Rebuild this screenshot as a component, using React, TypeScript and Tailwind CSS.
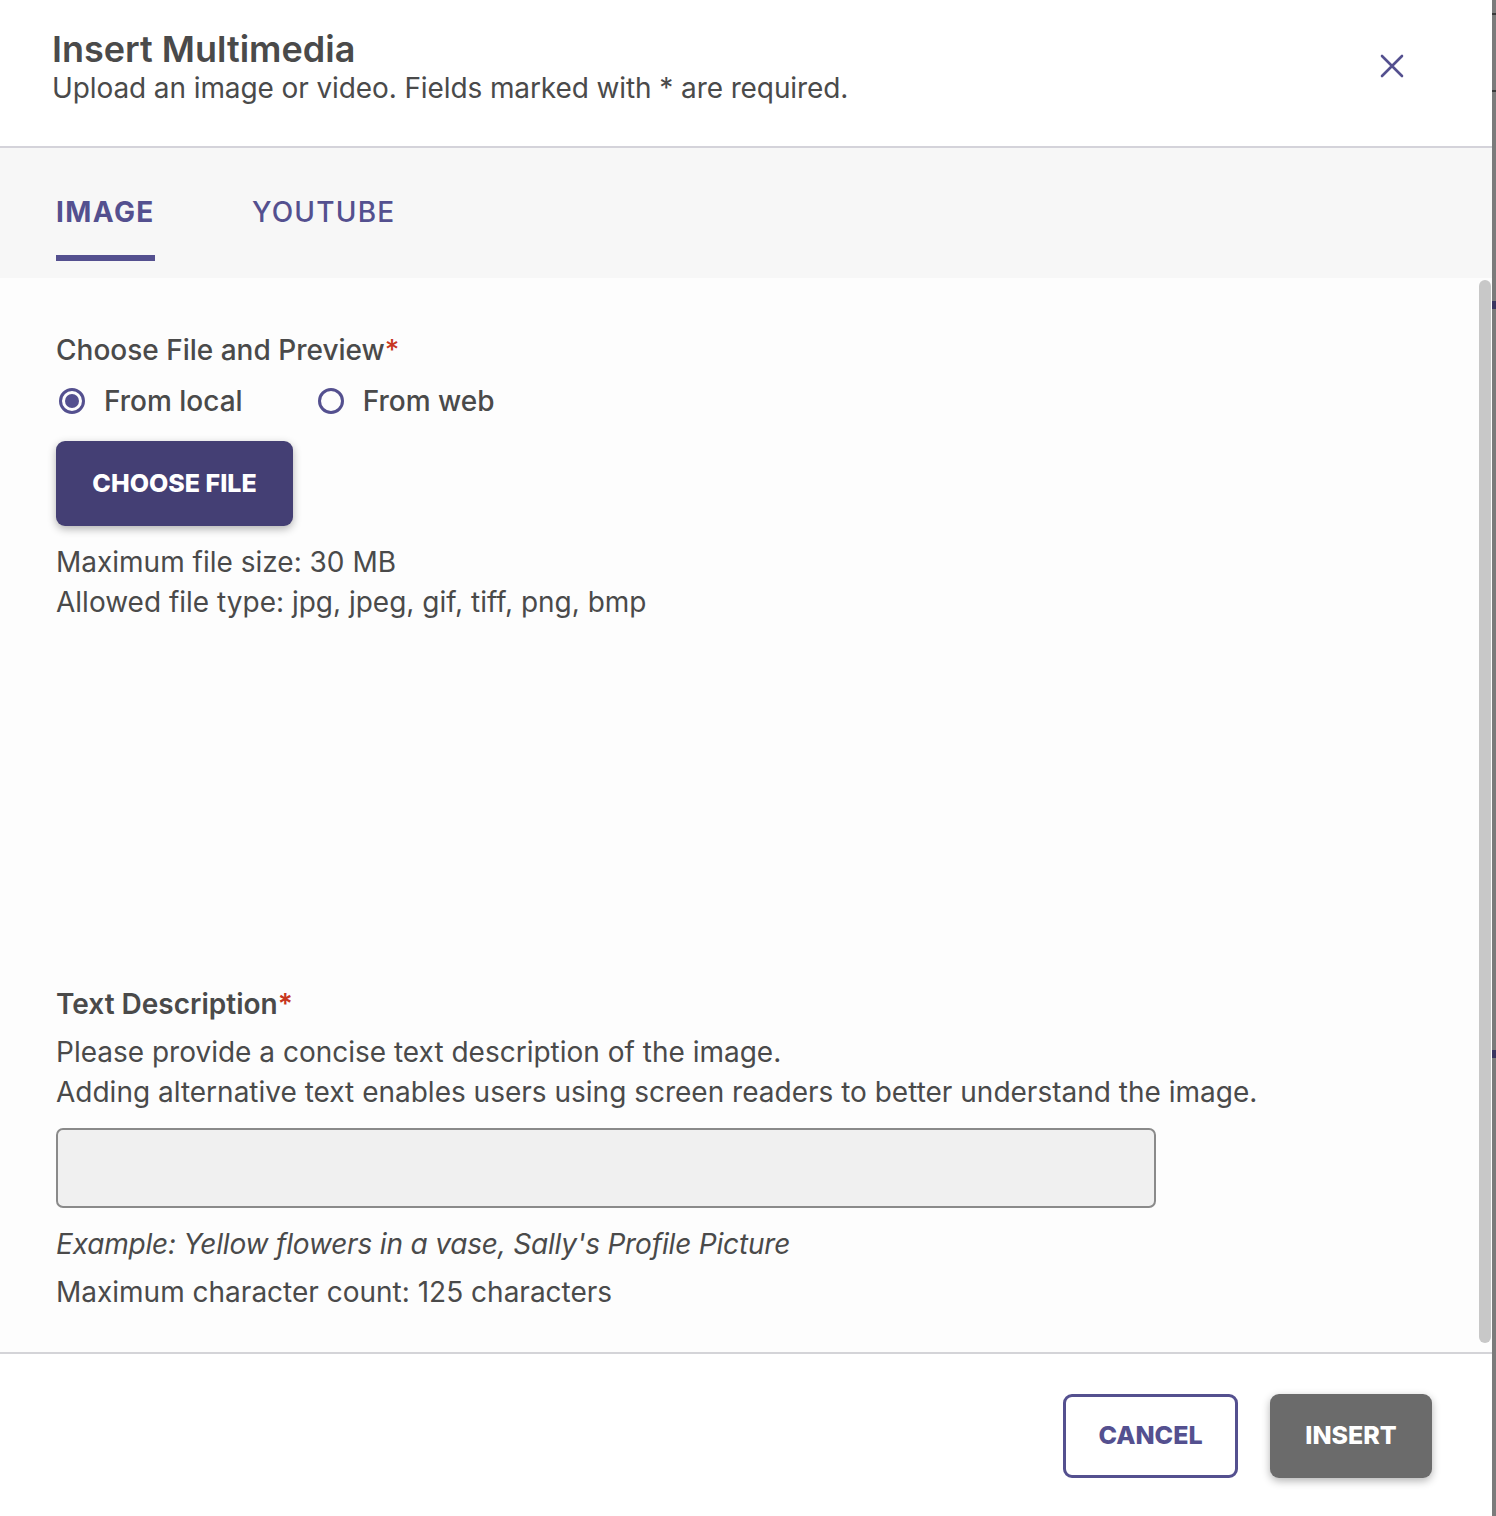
import React from "react";

function Radio({ checked, label }: { checked?: boolean; label: string }) {
  return (
    <label className="flex items-center gap-[19px]">
      <span className="flex h-[26px] w-[26px] items-center justify-center rounded-full border-[3px] border-[#54508f]">
        {checked && <span className="h-[14px] w-[14px] rounded-full bg-[#54508f]" />}
      </span>
      <span>{label}</span>
    </label>
  );
}

function App() {
  return (
    <div className="flex min-h-[1516px] w-full bg-white font-['Inter','Liberation_Sans',sans-serif] text-[#4a4a4a]">
      <div className="flex flex-1 flex-col">
        {/* header */}
        <header className="flex h-[148px] items-start justify-between border-b-2 border-[#d4d3da] pl-[52px] pr-[88px] pt-[28px]">
          <div>
            <h1 className="text-[36px] font-semibold leading-[42px]">Insert Multimedia</h1>
            <p className="text-[28px] leading-[36px] tracking-[-0.1px]">
              Upload an image or video. Fields marked with * are required.
            </p>
          </div>
          <button className="mt-[26px] text-[#54508f]" aria-label="Close">
            <svg width="24" height="24" viewBox="0 0 24 24" fill="none" stroke="currentColor" strokeWidth="2.6" strokeLinecap="round">
              <path d="M2 2L22 22M22 2L2 22" />
            </svg>
          </button>
        </header>

        {/* tabs */}
        <div className="flex h-[130px] gap-[97px] bg-[#f7f7f7] pl-[56px]">
          <div className="flex flex-col pt-[48px]">
            <span className="text-[28px] font-bold leading-[32px] tracking-[1.4px] text-[#54508f]">IMAGE</span>
            <span className="mt-[27px] h-[6px] w-[99px] bg-[#54508f]" />
          </div>
          <div className="flex flex-col pt-[48px]">
            <span className="text-[28px] font-medium leading-[32px] tracking-[1.2px] text-[#54508f]">YOUTUBE</span>
          </div>
        </div>

        {/* body */}
        <div className="flex h-[1076px] border-b-2 border-[#d4d4d8] bg-[#fdfdfd]">
          <div className="flex flex-1 flex-col pl-[56px] pt-[54px]">
            <div className="text-[28px] font-medium leading-[36px]">
              Choose File and Preview<span className="text-[#c7361f]">*</span>
            </div>
            <div className="mt-[15px] flex h-[36px] items-center gap-[75px] pl-[3px] text-[28px] font-medium">
              <Radio checked label="From local" />
              <Radio label="From web" />
            </div>
            <button className="mt-[22px] h-[85px] w-[237px] rounded-[9px] bg-[#443f74] text-[25px] font-extrabold text-white shadow-[0_3px_8px_rgba(0,0,0,0.3)]">
              CHOOSE FILE
            </button>
            <div className="mt-[16px] text-[28px] leading-[40px]">
              <p>Maximum file size: 30 MB</p>
              <p>Allowed file type: jpg, jpeg, gif, tiff, png, bmp</p>
            </div>
            <div className="h-[364px]" />
            <div className="text-[28px] font-semibold leading-[36px]">
              Text Description<span className="text-[#c7361f]">*</span>
            </div>
            <div className="mt-[10px] text-[28px] leading-[40px]">
              <p>Please provide a concise text description of the image.</p>
              <p>Adding alternative text enables users using screen readers to better understand the image.</p>
            </div>
            <input
              className="mt-[16px] h-[80px] w-[1100px] rounded-[7px] border-2 border-[#8a8a8a] bg-[#f0f0f0] px-4 text-[28px] outline-none"
              aria-label="Text description"
            />
            <p className="mt-[16px] text-[28px] italic leading-[40px] tracking-[-0.18px]">
              Example: Yellow flowers in a vase, Sally's Profile Picture
            </p>
            <p className="mt-[8px] text-[28px] leading-[40px]">Maximum character count: 125 characters</p>
          </div>
          <div className="mr-[1px] flex w-[12px] flex-col pb-[9px] pt-[2px]">
            <div className="flex-1 rounded-full bg-[#c8c8c8]" />
          </div>
        </div>

        {/* footer */}
        <footer className="flex justify-end gap-[32px] pr-[60px] pt-[40px]">
          <button className="h-[84px] w-[175px] rounded-[9px] border-[3px] border-[#54508f] bg-white text-[25px] font-extrabold text-[#54508f]">
            CANCEL
          </button>
          <button className="h-[84px] w-[162px] rounded-[9px] bg-[#6b6b6b] text-[25px] font-extrabold text-white shadow-[0_3px_8px_rgba(0,0,0,0.3)]">
            INSERT
          </button>
        </footer>
      </div>

      {/* backdrop edge */}
      <div className="flex w-[4px] flex-col bg-[#7b7b7b]">
        <div className="mt-[13px] h-[2px] bg-[#3a3a3a]" />
        <div className="mt-[75px] h-[2px] bg-[#3a3a3a]" />
        <div className="mt-[209px] h-[8px] bg-[#3a3560]" />
        <div className="mt-[741px] h-[8px] bg-[#3a3560]" />
      </div>
    </div>
  );
}

export default App;
